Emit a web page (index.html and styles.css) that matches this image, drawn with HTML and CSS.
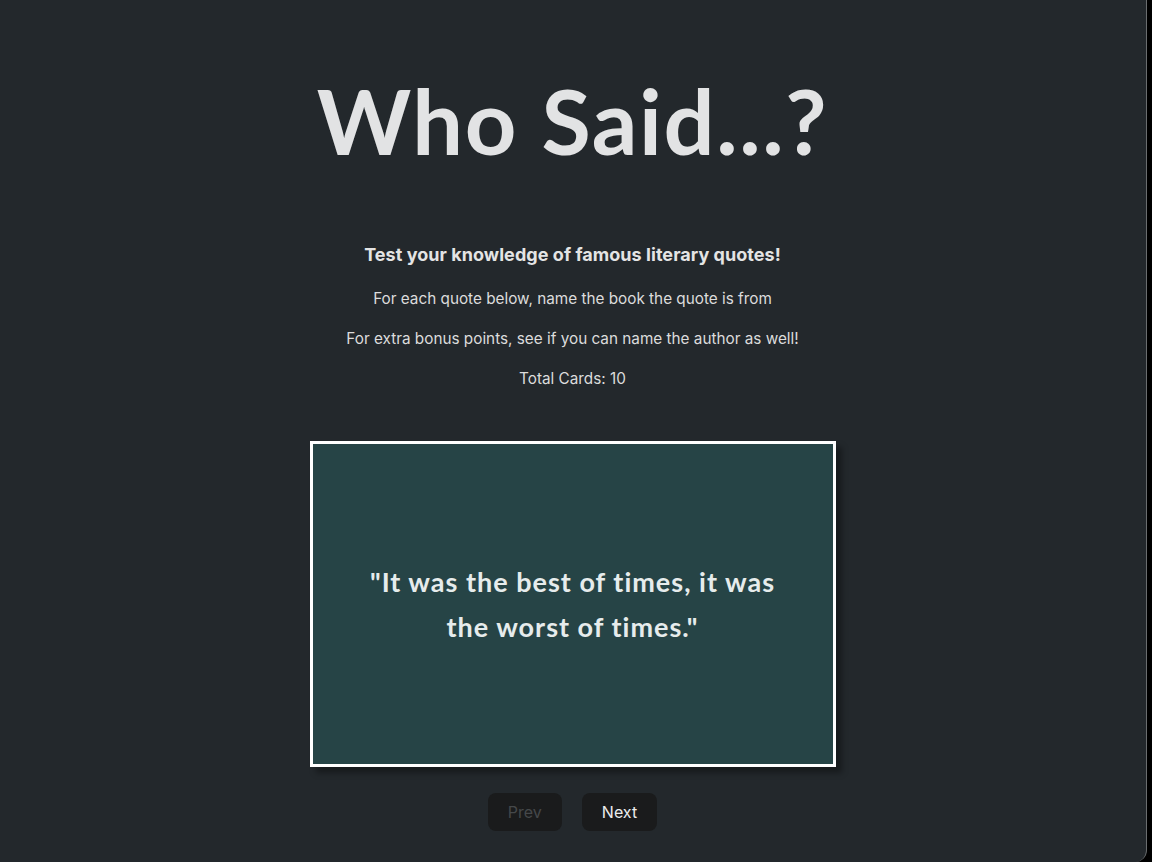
FILE: index.html
```html
<!DOCTYPE html>
<html lang="en">
<head>
<meta charset="utf-8">
<title>Who Said...?</title>
<link rel="stylesheet" href="styles.css">
</head>
<body>
<div class="window">
  <main class="app">
    <h1 class="title">Who Said...?</h1>
    <section class="intro">
      <h2 class="lead">Test your knowledge of famous literary quotes!</h2>
      <p>For each quote below, name the book the quote is from</p>
      <p>For extra bonus points, see if you can name the author as well!</p>
      <p>Total Cards: 10</p>
    </section>
    <div class="card">
      <p class="quote">"It was the best of times, it was the worst of times."</p>
    </div>
    <div class="nav">
      <button class="btn btn-disabled" disabled>Prev</button>
      <button class="btn">Next</button>
    </div>
  </main>
</div>
</body>
</html>
```

FILE: styles.css
```css
html, body {
  margin: 0;
  padding: 0;
  height: 100%;
  background: #000;
}
.window {
  width: 1147px;
  height: 862px;
  background: #23282c;
  border-right: 1px solid #6b6e70;
  border-bottom-right-radius: 12px;
  overflow: hidden;
  box-sizing: border-box;
  color: #e4e4e4;
  font-family: Inter, "Noto Sans", sans-serif;
}
.app {
  display: flex;
  flex-direction: column;
  align-items: center;
  padding-top: 65px;
  padding-right: 1px;
}
.title {
  margin: 0;
  font-family: "Lato", "Noto Sans", sans-serif;
  font-weight: 700;
  font-size: 90px;
  line-height: 110px;
  letter-spacing: 1.6px;
  color: #e2e3e4;
}
.intro {
  margin-top: 68px;
  display: flex;
  flex-direction: column;
  align-items: center;
  gap: 16px;
}
.lead {
  margin: 0 0 4px;
  font-size: 18px;
  font-weight: 700;
  line-height: 24px;
  letter-spacing: 0.05px;
}
.intro p {
  margin: 0;
  font-size: 15.3px;
  line-height: 24px;
  color: #dcdcdc;
}
.card {
  margin-top: 50px;
  width: 526px;
  height: 326px;
  box-sizing: border-box;
  border: 3px solid #ffffff;
  background: #264446;
  box-shadow: 6px 6px 6px rgba(0, 0, 0, 0.35);
  display: flex;
  align-items: center;
  justify-content: center;
  padding: 0 50px;
}
.quote {
  margin: 0;
  text-align: center;
  font-family: "Lato", "Noto Sans", sans-serif;
  font-weight: 700;
  font-size: 27px;
  line-height: 45px;
  letter-spacing: 1px;
  color: #e6ecec;
}
.nav {
  margin-top: 26px;
  display: flex;
  gap: 20px;
}
.btn {
  height: 38px;
  padding: 0 20px;
  border: none;
  border-radius: 8px;
  background: #1a1b1c;
  color: #ececec;
  font-family: Inter, "Noto Sans", sans-serif;
  font-size: 16px;
  font-weight: 400;
}
.btn-disabled {
  color: #45484a;
}
```
